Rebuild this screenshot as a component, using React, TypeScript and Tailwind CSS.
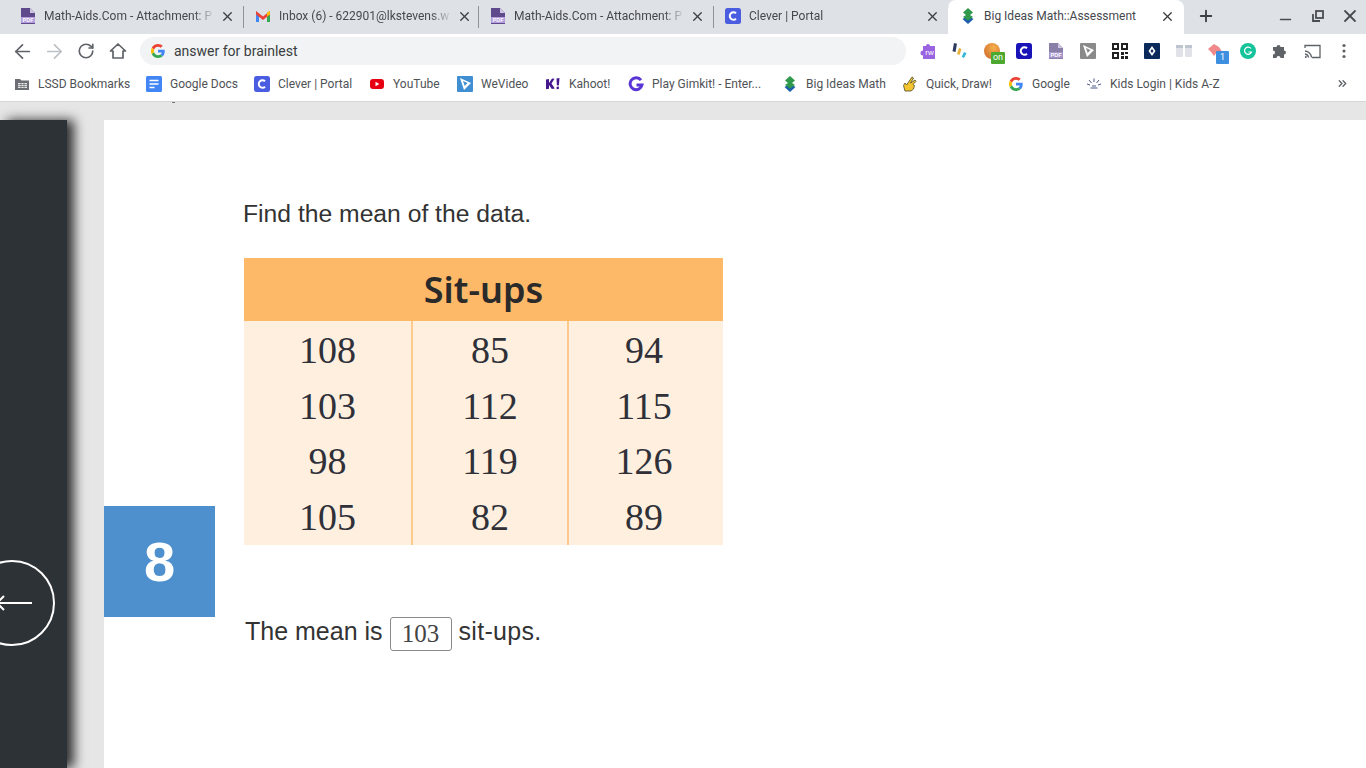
import type { ReactNode } from 'react';
import { ArrowLeft, ArrowRight, ChevronsRight, Minus, Plus, RotateCw, X } from 'lucide-react';

function PdfIcon({ tone = '#5f4b8b', band = '#b39ddb' }: { tone?: string; band?: string }) {
  return (
    <svg width="16" height="16" viewBox="0 0 16 16" className="shrink-0">
      <path d="M1 0h9l5 5v11H1z" fill={tone} />
      <path d="M10 0v5h5z" fill="#cfc6e2" />
      <rect x="1" y="9" width="14" height="6" fill={band} />
      <text x="8" y="14" textAnchor="middle" fontSize="5.5" fontWeight="700" fill="#fff" fontFamily="'Liberation Sans', sans-serif">PDF</text>
    </svg>
  );
}

function GmailIcon() {
  return (
    <svg width="16" height="16" viewBox="0 0 16 16" className="shrink-0">
      <path d="M1 3v11h3V7z" fill="#4285f4" />
      <path d="M15 3v11h-3V7z" fill="#34a853" />
      <path d="M1 3l7 5.500L15 3v3.500L8 12 1 6.500z" fill="#ea4335" />
      <path d="M12 4.500 15 3v3.500l-3 2.300z" fill="#fbbc04" />
    </svg>
  );
}

function CleverIcon({ size = 16, bg = '#4a5de0' }: { size?: number; bg?: string }) {
  return (
    <svg width={size} height={size} viewBox="0 0 16 16" className="shrink-0">
      <rect width="16" height="16" rx="2.500" fill={bg} />
      <path d="M11 5.300A3.700 3.700 0 1 0 11 10.700" fill="none" stroke="#fff" strokeWidth="2" />
    </svg>
  );
}

function BigIdeasIcon() {
  return (
    <svg width="16" height="16" viewBox="0 0 16 16" className="shrink-0">
      <path d="M8 8 13.500 11 8 16 2.500 11z" fill="#1b5faa" />
      <path d="M8 0l5 4.500L10 7l3 2-5 3.500L3 9l3-2-3-2.500z" fill="#2f9a4c" />
    </svg>
  );
}

function GoogleG({ size = 14 }: { size?: number }) {
  return (
    <svg width={size} height={size} viewBox="0 0 48 48" className="shrink-0">
      <path fill="#ea4335" d="M24 9.500c3.500 0 6.700 1.200 9.200 3.600l6.900-6.900C35.900 2.400 30.500 0 24 0 14.600 0 6.500 5.400 2.600 13.200l8 6.200C12.500 13.700 17.800 9.500 24 9.500z" />
      <path fill="#4285f4" d="M47 24.500c0-1.600-.1-3.100-.4-4.500H24v9h13c-.6 3-2.200 5.500-4.800 7.200l7.700 6C44.400 38 47 31.800 47 24.500z" />
      <path fill="#fbbc05" d="M10.600 28.600a14.500 14.500 0 0 1 0-9.200l-8-6.200a24 24 0 0 0 0 21.600z" />
      <path fill="#34a853" d="M24 48c6.500 0 11.900-2.100 15.900-5.800l-7.700-6c-2.200 1.400-4.900 2.300-8.200 2.300-6.200 0-11.500-4.200-13.400-9.900l-8 6.200C6.500 42.600 14.600 48 24 48z" />
    </svg>
  );
}

function FolderIcon() {
  return (
    <svg width="16" height="16" viewBox="0 0 16 16" className="shrink-0">
      <path d="M1 3h5l1.500 1.500H15V14H1z" fill="#6b6f73" />
      <rect x="4" y="7" width="9" height="5" fill="#e8e8e8" />
      <path d="M4 8.500h9M4 10.500h9M7 7v5M10 7v5" stroke="#6b6f73" strokeWidth="0.700" />
    </svg>
  );
}

function DocsIcon() {
  return (
    <svg width="16" height="16" viewBox="0 0 16 16" className="shrink-0">
      <rect width="16" height="16" rx="1.500" fill="#4285f4" />
      <path d="M3.500 4.500h9M3.500 8h9M3.500 11.500h5" stroke="#fff" strokeWidth="1.500" />
    </svg>
  );
}

function YoutubeIcon() {
  return (
    <svg width="16" height="16" viewBox="0 0 16 16" className="shrink-0">
      <rect x="1" y="3" width="14" height="10" rx="3" fill="#e60012" />
      <path d="M6.500 5.800v4.400L10.300 8z" fill="#fff" />
    </svg>
  );
}

function WeVideoIcon({ gray = false }: { gray?: boolean }) {
  const bg = gray ? '#8a8a8a' : '#3f8fd2';
  return (
    <svg width="16" height="16" viewBox="0 0 16 16" className="shrink-0">
      <rect width="16" height="16" rx="1" fill={bg} />
      <path d="M3 2l11 5-7 7z" fill="#fff" />
      <path d="M6 5l4.500 2-2.800 3z" fill={bg} />
    </svg>
  );
}

function KahootIcon() {
  return (
    <svg width="16" height="16" viewBox="0 0 16 16" className="shrink-0">
      <path d="M1 3.500l3-.5v4l3-4.500 2.500.3L6.500 7.500l3.300 5-3 .6L4 9v3.800l-3 .5z" fill="#46178f" />
      <path d="M11.500 2.500l3-.5-.6 7.300-2 .2zM11.600 10.800l2.300-.3v2.400l-2.300.3z" fill="#46178f" />
    </svg>
  );
}

function GimkitIcon() {
  return (
    <svg width="16" height="16" viewBox="0 0 16 16" className="shrink-0">
      <path d="M13 4.200A6 6 0 1 0 14 9H8.500" fill="none" stroke="#5a35d6" strokeWidth="3" />
    </svg>
  );
}

function QuickDrawIcon() {
  return (
    <svg width="16" height="16" viewBox="0 0 16 16" className="shrink-0">
      <path d="M3 15 1.500 9.500 3 7l1.500 2L10 1l1.500 1-3 5 4.500-3 1 1.300-3 3.200 1.500 1-1 3.500L9 15z" fill="#f4c430" stroke="#4a4a20" strokeWidth="0.800" />
    </svg>
  );
}

function KidsIcon() {
  return (
    <svg width="16" height="16" viewBox="0 0 16 16" className="shrink-0" stroke="#4a5a8a" strokeWidth="1">
      <path d="M1 8l3 1M3 4l2.500 3M8 2.500V6M13 4l-2.500 3M15 8l-3 1M4.500 12h7M6 10h4" fill="none" />
    </svg>
  );
}

const TABS: { title: string; icon: ReactNode }[] = [
  { title: 'Math-Aids.Com - Attachment: P', icon: <PdfIcon /> },
  { title: 'Inbox (6) - 622901@lkstevens.w', icon: <GmailIcon /> },
  { title: 'Math-Aids.Com - Attachment: P', icon: <PdfIcon /> },
  { title: 'Clever | Portal', icon: <CleverIcon /> },
];

const BOOKMARKS: { label: string; icon: ReactNode; width: string }[] = [
  { label: 'LSSD Bookmarks', icon: <FolderIcon />, width: 'w-[132px]' },
  { label: 'Google Docs', icon: <DocsIcon />, width: 'w-[108px]' },
  { label: 'Clever | Portal', icon: <CleverIcon />, width: 'w-[115px]' },
  { label: 'YouTube', icon: <YoutubeIcon />, width: 'w-[88px]' },
  { label: 'WeVideo', icon: <WeVideoIcon />, width: 'w-[88px]' },
  { label: 'Kahoot!', icon: <KahootIcon />, width: 'w-[83px]' },
  { label: 'Play Gimkit! - Enter...', icon: <GimkitIcon />, width: 'w-[154px]' },
  { label: 'Big Ideas Math', icon: <BigIdeasIcon />, width: 'w-[120px]' },
  { label: 'Quick, Draw!', icon: <QuickDrawIcon />, width: 'w-[106px]' },
  { label: 'Google', icon: <span className="w-[16px] flex justify-center"><GoogleG /></span>, width: 'w-[78px]' },
  { label: 'Kids Login | Kids A-Z', icon: <KidsIcon />, width: 'w-[150px]' },
];

const ROWS = [
  ['108', '85', '94'],
  ['103', '112', '115'],
  ['98', '119', '126'],
  ['105', '82', '89'],
];

const EXTENSIONS: ReactNode[] = [
  <svg width="18" height="18" viewBox="0 0 18 18">
    <path d="M4 4h3a2 2 0 0 1 4 0h5v13H4v-3.500a2.500 2.500 0 0 1 0-5z" fill="#9a63e0" />
    <text x="10.500" y="13" textAnchor="middle" fontSize="8" fill="#fff" fontFamily="'Liberation Sans', sans-serif">rw</text>
  </svg>,
  <svg width="18" height="18" viewBox="0 0 18 18">
    <path d="M3 1l3 .800L4.500 10l-3-.8z" fill="#2f3a5f" />
    <path d="M8 6l2.500 1L8.500 13 6 12z" fill="#e8b23a" />
    <path d="M13 10l2.500 1.300L13 16l-2.300-1.300z" fill="#35b7d8" />
  </svg>,
  <div className="relative w-[16px] h-[16px]">
    <div className="w-[16px] h-[16px] rounded-full bg-[radial-gradient(circle_at_60%_30%,#f5b04a,#c9602a)]" />
    <div className="absolute -right-[5px] -bottom-[5px] w-[14px] h-[12px] bg-[#4ca82e] rounded-[1px] text-white text-[9px] leading-[11px] text-center font-['Roboto',sans-serif]">on</div>
  </div>,
  <CleverIcon size={16} bg="#1a14b8" />,
  <PdfIcon tone="#8a7fa6" band="#a594c9" />,
  <WeVideoIcon gray />,
  <svg width="16" height="16" viewBox="0 0 16 16">
    <path d="M0 0h7v7H0zM2 2v3h3V2zM9 0h7v7H9zM11 2v3h3V2zM0 9h7v7H0zM2 11v3h3v-3zM9 9h3v3H9zM13 9h3v2h-3zM13 13h3v3h-3zM9 13h3v3H9z" fill="#222" fillRule="evenodd" />
  </svg>,
  <svg width="16" height="16" viewBox="0 0 16 16">
    <rect width="16" height="16" rx="1" fill="#0b2a5c" />
    <path d="M8 3l3.500 5L8 13 4.500 8z" fill="#fff" />
    <path d="M8 6l1.500 2L8 10 6.500 8z" fill="#0b2a5c" />
  </svg>,
  <svg width="16" height="16" viewBox="0 0 16 16">
    <rect y="2" width="7" height="12" rx="1" fill="#dfe3e8" />
    <rect x="9" y="2" width="7" height="12" rx="1" fill="#dfe3e8" />
    <rect y="2" width="7" height="3" fill="#bcc5d0" />
    <rect x="9" y="2" width="7" height="3" fill="#bcc5d0" />
  </svg>,
  <div className="relative w-[16px] h-[16px]">
    <svg width="16" height="16" viewBox="0 0 16 16">
      <path d="M0 6l6-5 5 3 4 6-6-1-3 4-3-4z" fill="#f08a8a" />
    </svg>
    <div className="absolute -right-[5px] -bottom-[5px] w-[13px] h-[13px] bg-[#3f8fe0] rounded-[1px] text-white text-[9px] leading-[13px] text-center font-['Roboto',sans-serif]">1</div>
  </div>,
  <div className="w-[16px] h-[16px] rounded-full bg-[#15c39a] flex items-center justify-center">
    <svg width="10" height="10" viewBox="0 0 10 10">
      <path d="M8 2.500A3.600 3.600 0 1 0 8.500 6H5.500" fill="none" stroke="#fff" strokeWidth="1.200" />
    </svg>
  </div>,
  <svg width="16" height="16" viewBox="0 0 16 16">
    <path d="M1 4h3.500a2 2 0 0 1 4 0H12v3.500a2 2 0 0 1 0 4V15H8.500a2 2 0 0 0-4 0H1v-3.500a2 2 0 0 0 0-4z" fill="#5f6368" />
  </svg>,
  <svg width="17" height="15" viewBox="0 0 17 15" fill="none" stroke="#5f6368" strokeWidth="1.300">
    <path d="M1 4V1.500h15v12H8" />
    <path d="M1 7a7 7 0 0 1 6.500 6.500M1 10a4 4 0 0 1 3.500 3.500" />
    <circle cx="1.800" cy="13" r="1" fill="#5f6368" stroke="none" />
  </svg>,
  <svg width="4" height="16" viewBox="0 0 4 16" fill="#5f6368">
    <circle cx="2" cy="2.500" r="1.600" />
    <circle cx="2" cy="8" r="1.600" />
    <circle cx="2" cy="13.500" r="1.600" />
  </svg>,
];

function BrowserChrome() {
  return (
    <header className="font-['Roboto',sans-serif]">
      {/* tab strip */}
      <div className="h-[34px] bg-[#dee1e6] flex pl-[9px] text-[12px] text-[#45484c]">
        {TABS.map((tab, i) => (
          <div
            key={i}
            className="w-[235px] h-[34px] pb-[2px] flex items-center pl-[11px] pr-[8px] gap-[8px] border-r border-[#a9acb0] [border-image:linear-gradient(transparent_20%,#8f9296_20%,#8f9296_80%,transparent_80%)_1] last:border-r-0"
          >
            {tab.icon}
            <span className="flex-1 whitespace-nowrap [mask-image:linear-gradient(90deg,#000_89%,rgba(0,0,0,0.15)_100%)]">{tab.title}</span>
            <X size={15} strokeWidth={2.200} className="text-[#3c4043] shrink-0" />
          </div>
        ))}
        <div className="w-[236px] -ml-[1px] h-[34px] pb-[2px] bg-white rounded-t-[8px] flex items-center pl-[12px] pr-[9px] gap-[8px]">
          <BigIdeasIcon />
          <span className="flex-1 whitespace-nowrap">Big Ideas Math::Assessment</span>
          <X size={15} strokeWidth={2.200} className="text-[#3c4043] shrink-0" />
        </div>
        <div className="h-[34px] pb-[2px] flex items-center ml-[13px]">
          <Plus size={18} strokeWidth={2.500} className="text-[#3c4043]" />
        </div>
        <div className="flex-1 h-[34px] pb-[2px] flex items-center justify-end pr-[6px] text-[#4a4d50]">
          <Minus size={17} strokeWidth={2.200} className="mt-[7px]" />
          <svg width="14" height="14" viewBox="0 0 14 14" fill="none" stroke="currentColor" strokeWidth="1.800" className="ml-[17px]">
            <rect x="5" y="2" width="7" height="7" />
            <path d="M2 5v7h7" />
          </svg>
          <X size={20} strokeWidth={2.200} className="ml-[15px]" />
        </div>
      </div>

      {/* toolbar */}
      <div className="h-[34px] bg-white flex items-center pl-[6px]">
        <div className="w-[32px] flex justify-center">
          <ArrowLeft size={23} strokeWidth={1.800} className="text-[#5f6368]" />
        </div>
        <div className="w-[32px] flex justify-center">
          <ArrowRight size={23} strokeWidth={1.800} className="text-[#bdc1c6]" />
        </div>
        <div className="w-[32px] flex justify-center">
          <RotateCw size={18} strokeWidth={2.200} className="text-[#5f6368]" />
        </div>
        <div className="w-[32px] flex justify-center">
          <svg width="18" height="18" viewBox="0 0 18 18" fill="none" stroke="#5f6368" strokeWidth="1.700">
            <path d="M1.500 9 9 2l7.500 7H14v7H4V9z" strokeLinejoin="round" />
          </svg>
        </div>
        <div className="w-[766px] h-[28px] ml-[6px] rounded-full bg-[#f1f3f4] flex items-center pl-[11px] gap-[9px] text-[14px] text-[#3a3d40]">
          <GoogleG />
          <span>answer for brainlest</span>
        </div>
        <div className="ml-[6px] flex">
          {EXTENSIONS.map((icon, i) => (
            <div key={i} className="w-[32px] h-[24px] flex items-center justify-center">
              {icon}
            </div>
          ))}
        </div>
      </div>

      {/* bookmarks */}
      <div className="h-[34px] pb-[2px] bg-white border-b border-[#d5d6d7] flex items-center pl-[14px] text-[12px] text-[#4f5256]">
        {BOOKMARKS.map((b) => (
          <div key={b.label} className={`${b.width} flex items-center gap-[8px] whitespace-nowrap`}>
            {b.icon}
            <span>{b.label}</span>
          </div>
        ))}
        <ChevronsRight size={13} strokeWidth={2.500} className="text-[#5f6368] ml-[100px]" />
      </div>
    </header>
  );
}

function SitupsTable() {
  return (
    <div className="w-[479px] ml-[1px] mt-[29px]">
      <div className="h-[63px] pt-[1px] bg-[#fdb868] flex items-center justify-center text-[36px] font-semibold text-[#2a2a2a] font-['Noto_Sans',sans-serif]">
        Sit-ups
      </div>
      <div className="h-[224px] bg-[#feefdf] grid grid-cols-[169px_156px_154px] font-['Liberation_Serif',serif] text-[38px] text-[#2f3038]">
        {[0, 1, 2].map((col) => (
          <div
            key={col}
            className={`flex flex-col pt-[2px] ${col < 2 ? 'border-r-2 border-[#fdc98c]' : 'pr-[4px]'}`}
          >
            {ROWS.map((row) => (
              <div key={row[col]} className="h-[55.500px] flex items-center justify-center">
                {row[col]}
              </div>
            ))}
          </div>
        ))}
      </div>
    </div>
  );
}

export default function App() {
  return (
    <div className="w-[1366px] h-[768px] overflow-hidden flex flex-col bg-[#e6e6e6]">
      <BrowserChrome />
      <div className="h-[18px] bg-[#e6e6e6] shrink-0 pl-[172px]">
        <div className="w-[3px] h-[1px] bg-[#777777]" />
      </div>
      <div className="flex-1 flex min-h-0">
        {/* left drawer */}
        <div className="w-[67px] bg-[#2d3236] shadow-[7px_0_11px_rgba(0,0,0,0.8)] pt-[438px] shrink-0 overflow-hidden">
          <svg width="67" height="90" viewBox="0 0 67 90" fill="none" stroke="#fff" strokeWidth="2">
            <circle cx="12" cy="45" r="42" />
            <path d="M0 45h32M4 38l-7 7 7 7" />
          </svg>
        </div>
        <div className="w-[37px] shrink-0" />

        {/* question */}
        <main className="flex-1 bg-white flex font-['Liberation_Sans',sans-serif] text-[#333333]">
          <div className="w-[111px] pt-[386px] shrink-0">
            <div className="w-[111px] h-[111px] bg-[#4d90cd] text-white text-[56px] font-bold flex items-center justify-center">8</div>
          </div>
          <div className="pl-[28px] pt-[79px]">
            <p className="text-[24.700px] leading-[30px]">Find the mean of the data.</p>
            <SitupsTable />
            <div className="mt-[72px] ml-[2px] flex items-start text-[25px] leading-[28px]">
              <span>The mean is</span>
              <span className="w-[62px] h-[34px] mx-[7px] border border-[#8a8a8a] rounded-[3px] flex items-center justify-center font-['Liberation_Serif',serif] text-[25px] text-[#444444]">103</span>
              <span className="tracking-[0.3px]">sit-ups.</span>
            </div>
          </div>
        </main>
      </div>
    </div>
  );
}
